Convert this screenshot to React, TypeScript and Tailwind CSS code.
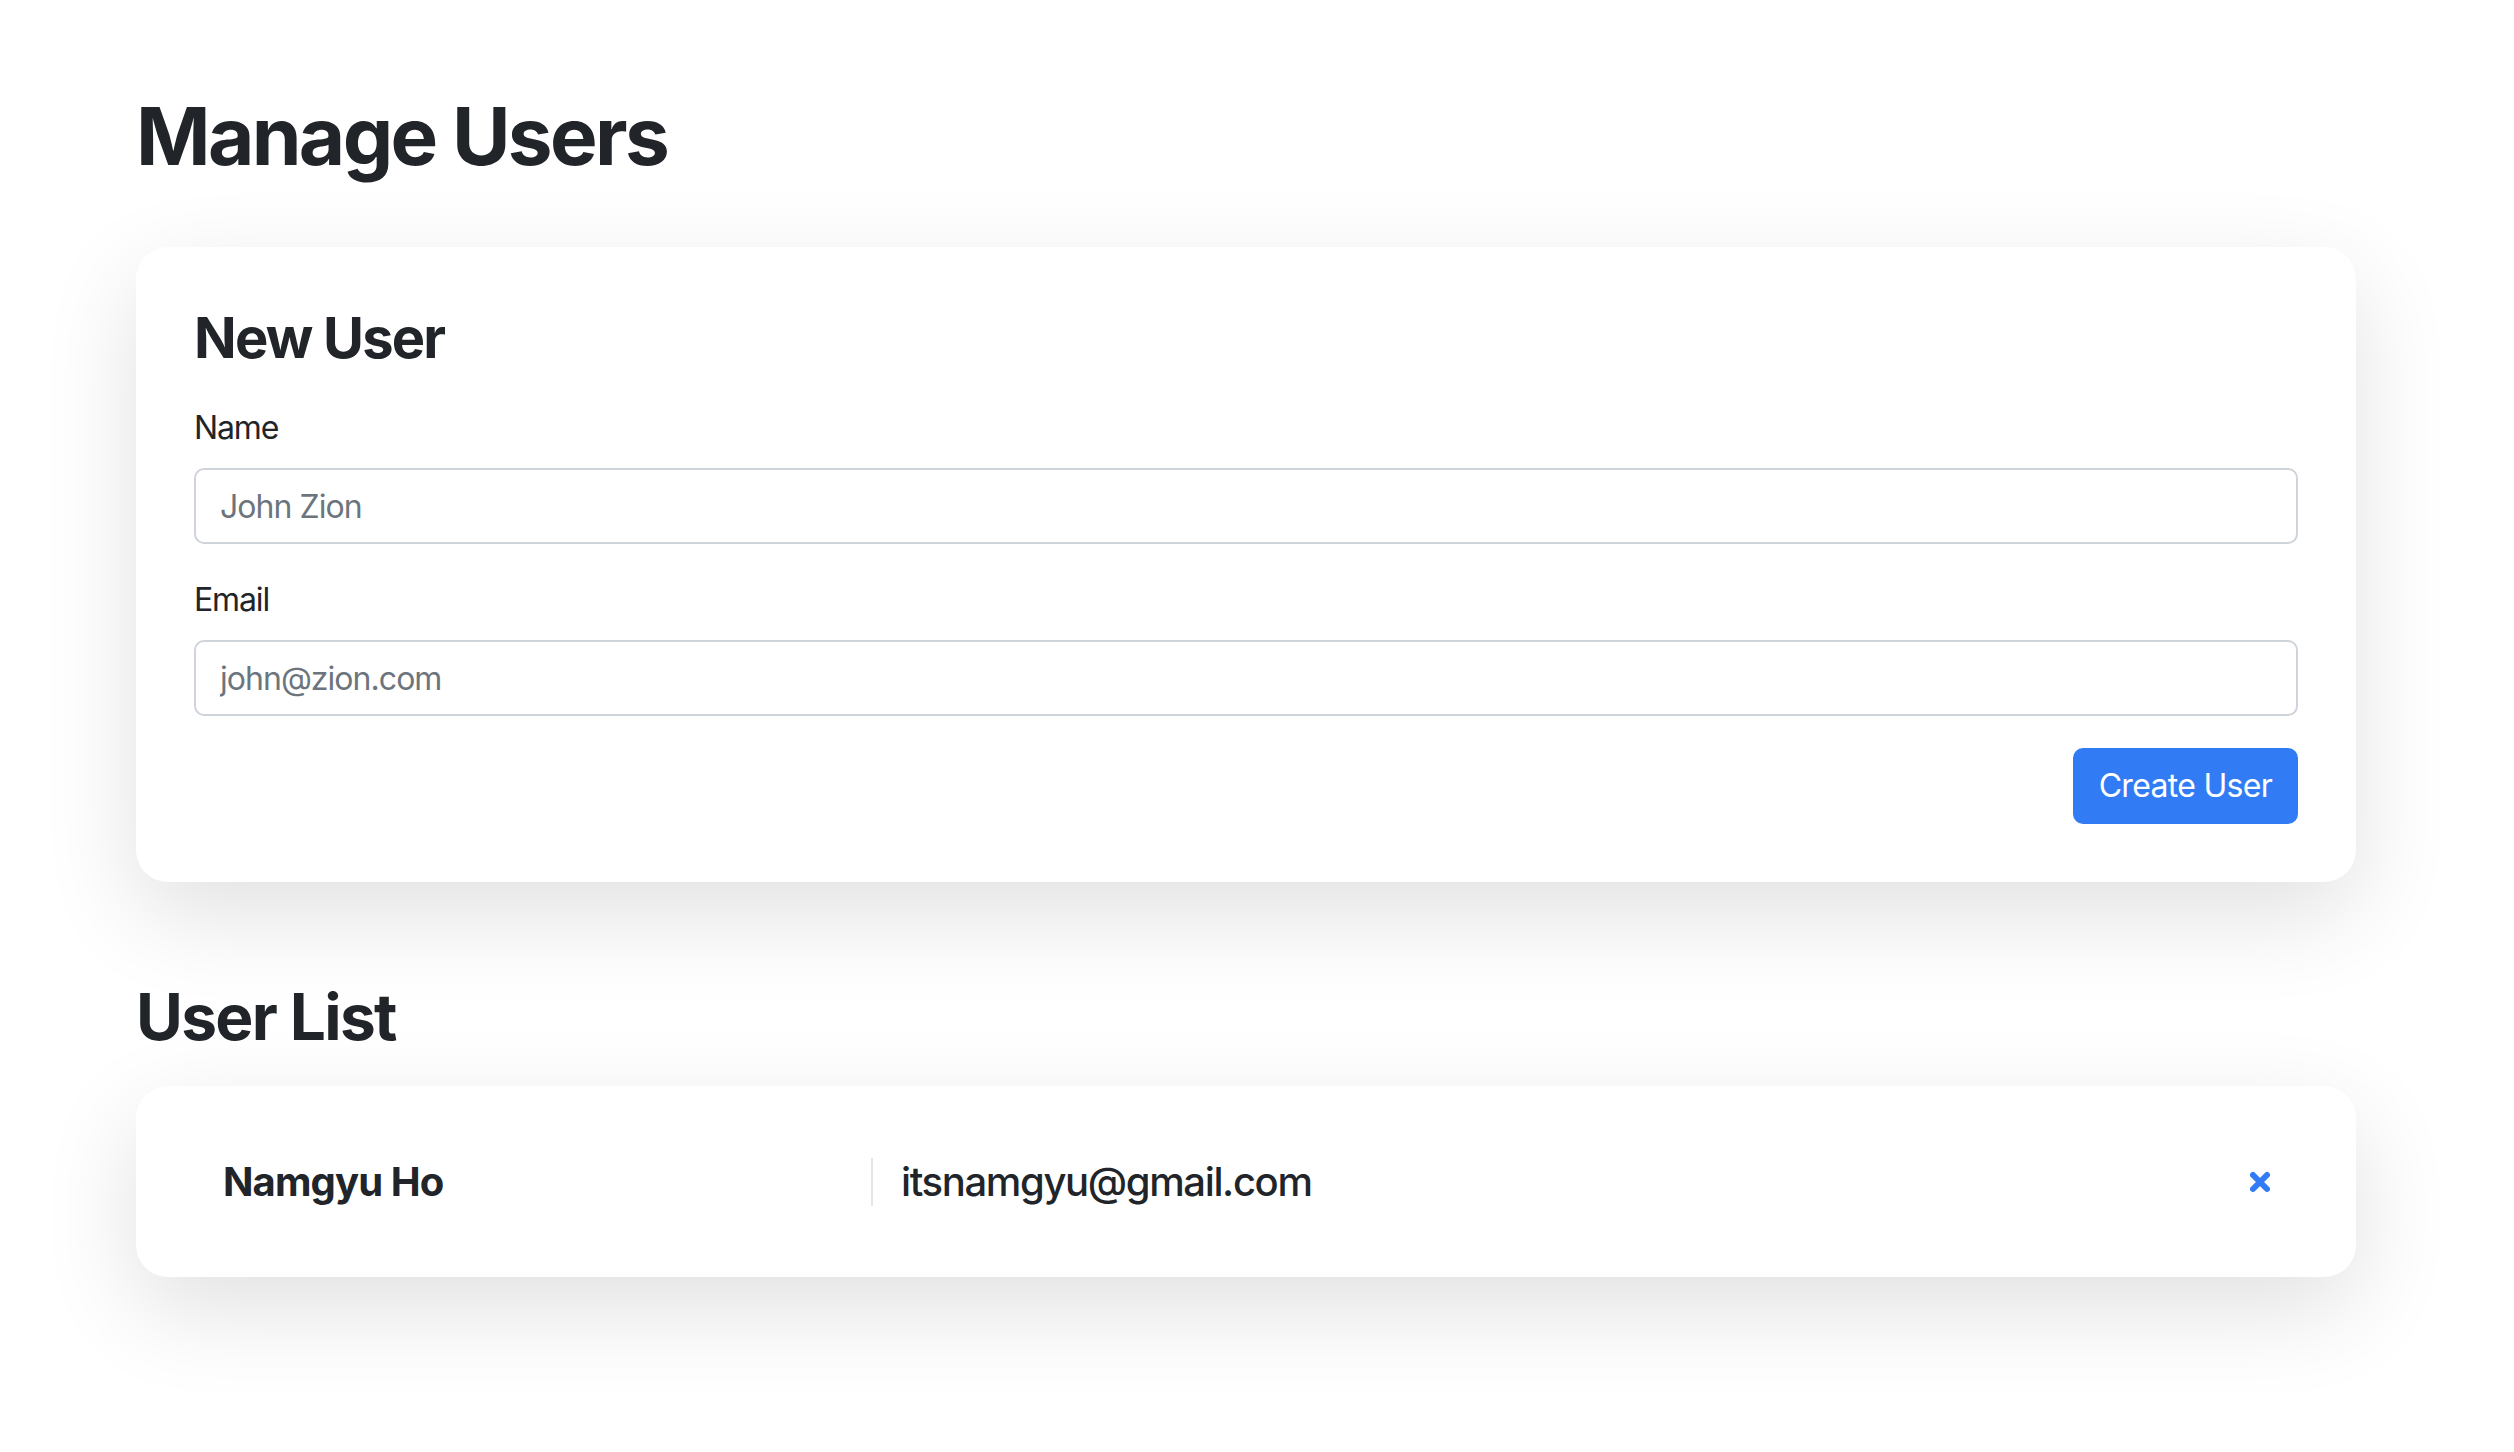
import React from "react";

function CloseIcon() {
  return (
    <svg width="24" height="24" viewBox="0 0 24 24" fill="none">
      <path d="M5 5L19 19M19 5L5 19" stroke="#317cf4" strokeWidth="6" strokeLinecap="round" />
    </svg>
  );
}

const users = [{ name: "Namgyu Ho", email: "itsnamgyu@gmail.com" }];

export default function App() {
  return (
    <div className="min-h-screen bg-white text-[#212529] font-['Inter','Liberation_Sans',sans-serif]">
      <div className="ml-[136px] w-[2220px] pt-[88px] pb-[120px]">
        <h1 className="text-[80px] leading-[96px] font-bold tracking-[-0.033em] mb-[63px]">Manage Users</h1>

        {/* New user form */}
        <div className="bg-white rounded-[32px] p-[58px] shadow-[0_32px_96px_rgba(0,0,0,0.12)]">
          <h3 className="text-[56px] leading-[67px] font-bold tracking-[-0.032em]">New User</h3>

          <label className="block mt-[32px] text-[32px] leading-[48px] tracking-[-0.035em]">Name</label>
          <input
            className="mt-[16px] block w-full h-[76px] border-2 border-[#ced4da] rounded-[10px] px-[24px] text-[32px] tracking-[-0.03em] placeholder:text-[#6c757d] outline-none"
            placeholder="John Zion"
          />

          <label className="block mt-[32px] text-[32px] leading-[48px] tracking-[-0.035em]">Email</label>
          <input
            className="mt-[16px] block w-full h-[76px] border-2 border-[#ced4da] rounded-[10px] px-[24px] text-[32px] tracking-[-0.03em] placeholder:text-[#6c757d] outline-none"
            placeholder="john@zion.com"
          />

          <div className="flex justify-end mt-[32px]">
            <button className="h-[76px] px-[26px] bg-[#317cf4] text-white text-[32px] leading-[48px] tracking-[-0.022em] rounded-[10px]">
              Create User
            </button>
          </div>
        </div>

        <h2 className="mt-[96px] text-[64px] leading-[77px] font-bold tracking-[-0.026em] mb-[31px]">User List</h2>

        {/* User rows */}
        {users.map((u) => (
          <div
            key={u.email}
            className="bg-white rounded-[32px] h-[191px] flex items-center pl-[87px] pr-[84px] shadow-[0_32px_96px_rgba(0,0,0,0.12)]"
          >
            <div className="w-[648px] text-[40px] leading-[48px] font-bold tracking-[-0.022em]">{u.name}</div>
            <div className="w-[2px] h-[48px] bg-[#e3e5e8]" />
            <div className="flex-1 pl-[28px] text-[40px] leading-[48px] font-medium tracking-[-0.034em]">{u.email}</div>
            <CloseIcon />
          </div>
        ))}
      </div>
    </div>
  );
}
